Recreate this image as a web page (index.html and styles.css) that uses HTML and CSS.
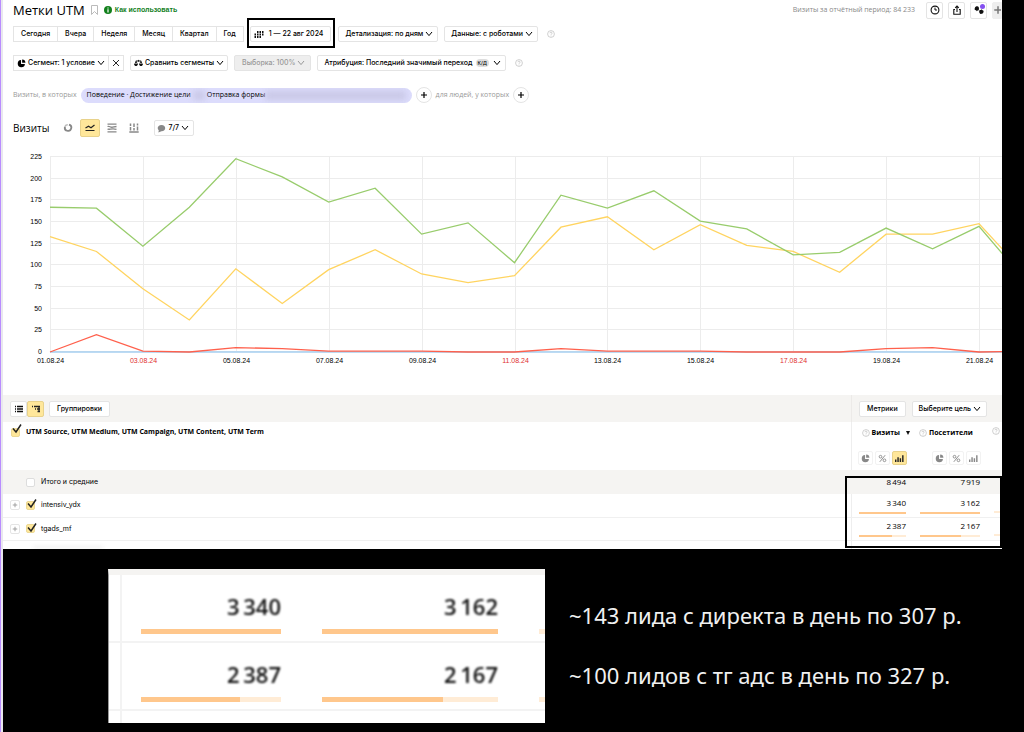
FILE: index.html
```
<!DOCTYPE html>
<html lang="ru">
<head>
<meta charset="utf-8">
<title>Метки UTM</title>
<link rel="stylesheet" href="styles.css">
</head>
<body>
<svg class="defs" aria-hidden="true">
  <symbol id="chev" viewBox="0 0 8 6"><path d="M1 1l3 3.600L7 1" fill="none" stroke="currentColor" stroke-width="1"/></symbol>
  <symbol id="help" viewBox="0 0 8 8"><circle cx="4" cy="4" r="3.400" fill="none" stroke="#bbb" stroke-width=".7"/><path d="M2.900 3.200c0-1.500 2.200-1.400 2.200 0 0 .8-1.100.8-1.100 1.600M4 5.600v.7" fill="none" stroke="#bbb" stroke-width=".7"/></symbol>
  <symbol id="pie" viewBox="0 0 10 10"><path d="M4.500 1.200A4 4 0 1 0 8.800 5.500H4.500z" fill="currentColor"/><path d="M5.700.6v3.700h3.700A3.800 3.800 0 0 0 5.700.6z" fill="currentColor"/></symbol>
  <symbol id="pct" viewBox="0 0 10 10"><g fill="none" stroke="currentColor"><circle cx="2.800" cy="3" r="1.500"/><circle cx="7.200" cy="7" r="1.500"/><path d="M8 1.300L2 8.700"/></g></symbol>
  <symbol id="bars" viewBox="0 0 10 10"><path d="M.8 9V6M3.400 9V3.500M6 9V4.800M8.700 9V1.500" stroke="currentColor" stroke-width="1.600"/></symbol>
  <symbol id="plus" viewBox="0 0 8 8"><path d="M4 1v6M1 4h6" stroke="currentColor" stroke-width="1.200"/></symbol>
  <symbol id="tick" viewBox="0 0 11 11"><path d="M2 4.500l3 3.500 5-7.500" fill="none" stroke="#222" stroke-width="1.500"/></symbol>
</svg>
<main class="report">
  <header class="head">
    <h1>Метки UTM</h1>
    <svg class="bookmark" viewBox="0 0 7 10"><path d="M.5.500h6v9l-3-3-3 3z" fill="none" stroke="#bbb"/></svg>
    <a class="howto" href="#"><svg viewBox="0 0 8 8"><circle cx="4" cy="4" r="4" fill="#12801c"/><path d="M4 1.500v1M4 3.300v3.200" stroke="#fff" stroke-width="1.200"/></svg>Как использовать</a>
    <span class="period">Визиты за отчётный период: 84 233</span>
    <div class="tools">
      <button aria-label="История"><svg viewBox="0 0 10 10"><circle cx="5" cy="5" r="3.900" fill="none" stroke="#111" stroke-width="1.100"/><path d="M5 2.600V5h2" fill="none" stroke="#111"/></svg></button>
      <button aria-label="Экспорт"><svg viewBox="0 0 10 10"><path d="M3 4.500H1.800v4.700h6.400V4.500H7M5 7V1M3.200 2.800L5 1l1.800 1.800" fill="none" stroke="#111" stroke-width="1.100"/></svg></button>
      <button class="feedback" aria-label="Отзыв"><svg viewBox="0 0 10 10"><path d="M3.400 1.200c1.700 0 2 3.300 1.100 4.100-.5.400-1.200-.1-1.600.9l-.9-1C.6 5 .3 4.300.8 3.200 1 1.800 2 1.200 3.400 1.200zM6.800 8.900c-1.700 0-2-3-1.100-3.800.5-.400 1.500.1 1.900-.9l.9 1c1.200.2 1.300 1 .9 2-.2 1.200-1.200 1.700-2.600 1.700z" fill="#111"/></svg></button>
      <button class="add" aria-label="Добавить"><svg viewBox="0 0 8 8"><use href="#plus"/></svg></button>
    </div>
  </header>

  <div class="bar dates">
    <div class="group">
      <button>Сегодня</button><button>Вчера</button><button>Неделя</button><button>Месяц</button><button>Квартал</button><button>Год</button>
    </div>
    <button class="btn range"><svg class="cal" viewBox="0 0 10 7"><path d="M3 1h1.500M5.500 1H7M8 1h1.500M.5 3.500H2M3 3.500h1.500M5.500 3.500H7M8 3.500h1.500M.5 6H2M3 6h1.500M5.500 6H7" stroke="#111" stroke-width="1.900"/></svg>1 — 22 авг 2024</button>
    <button class="btn">Детализация: по дням<svg class="chev"><use href="#chev"/></svg></button>
    <button class="btn">Данные: с роботами<svg class="chev"><use href="#chev"/></svg></button>
    <svg class="help"><use href="#help"/></svg>
  </div>

  <div class="bar segments">
    <div class="group seg">
      <button><svg class="ic"><use href="#pie"/></svg>Сегмент: 1 условие<svg class="chev"><use href="#chev"/></svg></button><button aria-label="Сбросить"><svg class="close" viewBox="0 0 8 8"><path d="M1 1l6 6M7 1L1 7" stroke="#111" stroke-width=".9"/></svg></button>
    </div>
    <button class="btn compare"><svg class="ic" viewBox="0 0 10 10"><g fill="none" stroke="#111"><path d="M2.300 2.500L.8 6M2.300 2.500L3.800 6M7.700 2.500L6.200 6M7.700 2.500L9.200 6M2 2.200L8 2.200M5 1v2"/></g><path d="M.2 5.500h4c0 3-4 3-4 0zM5.800 5.500h4c0 3-4 3-4 0z" fill="#111"/></svg>Сравнить сегменты<svg class="chev"><use href="#chev"/></svg></button>
    <button class="btn sample" disabled>Выборка: 100%<svg class="chev"><use href="#chev"/></svg></button>
    <button class="btn attr">Атрибуция: Последний значимый переход<span class="kd">К/Д</span><svg class="chev"><use href="#chev"/></svg></button>
    <svg class="help"><use href="#help"/></svg>
  </div>

  <div class="bar filter">
    <span class="muted">Визиты, в которых</span>
    <div class="chip"><span>Поведение · Достижение цели</span><i class="smudge short"></i><span>Отправка формы</span><i class="smudge"></i></div>
    <button class="round" aria-label="Добавить условие"><svg viewBox="0 0 8 8"><use href="#plus"/></svg></button>
    <span class="muted">для людей, у которых</span>
    <button class="round" aria-label="Добавить условие для людей"><svg viewBox="0 0 8 8"><use href="#plus"/></svg></button>
  </div>

  <div class="bar kinds">
    <h2>Визиты</h2>
    <div class="types">
      <button aria-label="Круговая"><svg viewBox="0 0 10 10"><path d="M6 1.600A3.200 3.200 0 1 1 2 3.800" fill="none" stroke="#888" stroke-width="1.800"/><path d="M2 3.600A3 3 0 0 1 4.800 1.700" fill="none" stroke="#bbb" stroke-width="1.600"/></svg></button>
      <button class="on" aria-label="Линии"><svg viewBox="0 0 10 10"><path d="M.5 5l3-1.800L6 4.800 9.500 2M.5 7.500h9" fill="none" stroke="#222" stroke-width="1.200"/></svg></button>
      <button aria-label="Области"><svg viewBox="0 0 10 10"><path d="M.5 1.200h9M.5 3.500c2-1 3 1.500 5 .6l4-.6M.5 6c2 1 4-1.200 9 .3M.5 8.800h9" fill="none" stroke="#888" stroke-width="1.300"/></svg></button>
      <button aria-label="Столбцы"><svg viewBox="0 0 10 10"><path d="M1.500.5v2.500M5 .5v3.500M8.500.5v2M1.500 4v3.500M5 5v2.500M8.500 3.500v4M.3 9h9.400" stroke="#888" stroke-width="1.500"/></svg></button>
    </div>
    <button class="btn count"><svg class="ic" viewBox="0 0 10 10"><path d="M5 1c5.500 0 5.500 7 0 7L1.500 9.500l.5-2.500C-.5 5 1 1 5 1z" fill="#888"/></svg>7/7<svg class="chev"><use href="#chev"/></svg></button>
  </div>

  <svg class="chart" viewBox="0 0 999 229" role="img" aria-label="Визиты по дням"></svg>

  <section class="grid">
    <div class="toolbar">
      <div class="view"><button aria-label="Список"><svg viewBox="0 0 8 8"><path d="M0 1.500h1M2 1.500h6M0 4h1M2 4h6M0 6.500h1M2 6.500h6" stroke="#111" stroke-width="1.300"/></svg></button><button class="on" aria-label="Дерево"><svg viewBox="0 0 8 8"><path d="M0 1.500h1M2 1.500h6M3 4h1M5 4h3M5.500 6.500H8M7 1v6" stroke="#222" stroke-width="1.300"/></svg></button></div>
      <button class="btn">Группировки</button>
      <div class="metrics"><button class="btn">Метрики</button><button class="btn goal">Выберите цель<svg class="chev"><use href="#chev"/></svg></button></div>
    </div>
    <table>
      <colgroup><col><col class="c1"><col class="c2"><col class="c3"></colgroup>
      <thead>
        <tr>
          <th><label class="check"><input type="checkbox" checked><svg><use href="#tick"/></svg><span>UTM Source, UTM Medium, UTM Campaign, UTM Content, UTM Term</span></label></th>
          <th class="edge"><div class="mhead"><svg class="help"><use href="#help"/></svg>Визиты<i class="sort"></i></div>
            <div class="modes"><button aria-label="Доли"><svg><use href="#pie"/></svg></button><button aria-label="Проценты"><svg><use href="#pct"/></svg></button><button class="on" aria-label="Полосы"><svg><use href="#bars"/></svg></button></div></th>
          <th><div class="mhead"><svg class="help"><use href="#help"/></svg>Посетители</div>
            <div class="modes"><button aria-label="Доли"><svg><use href="#pie"/></svg></button><button aria-label="Проценты"><svg><use href="#pct"/></svg></button><button aria-label="Полосы"><svg><use href="#bars"/></svg></button></div></th>
          <th><div class="mhead"><svg class="help"><use href="#help"/></svg></div></th>
        </tr>
      </thead>
      <tbody>
        <tr class="total"><td><label class="check inner"><input type="checkbox"><span>Итого и средние</span></label></td><td class="edge num">8&thinsp;494</td><td class="num">7&thinsp;919</td><td></td></tr>
        <tr><td><div class="row"><button class="expand" aria-label="Развернуть"><svg><use href="#plus"/></svg></button><label class="check"><input type="checkbox" checked><svg><use href="#tick"/></svg><span>intensiv_ydx</span></label></div></td>
          <td class="edge num">3&thinsp;340<div class="meter"><i style="width:100%"></i></div></td><td class="num">3&thinsp;162<div class="meter"><i style="width:100%"></i></div></td><td class="num"><div class="meter"></div></td></tr>
        <tr><td><div class="row"><button class="expand" aria-label="Развернуть"><svg><use href="#plus"/></svg></button><label class="check"><input type="checkbox" checked><svg><use href="#tick"/></svg><span>tgads_mf</span></label></div></td>
          <td class="edge num">2&thinsp;387<div class="meter"><i style="width:71%"></i></div></td><td class="num">2&thinsp;167<div class="meter"><i style="width:69%"></i></div></td><td class="num"><div class="meter"></div></td></tr>
        <tr class="rest"><td><div class="ghost"></div></td><td class="edge"></td><td></td><td></td></tr>
      </tbody>
    </table>
    <div class="mark"></div>
  </section>
</main>

<section class="summary">
  <div class="closeup">
    <div class="cell first"><b>3&thinsp;340</b><div class="meter"><i style="width:100%"></i></div></div><div class="cell"><b>3&thinsp;162</b><div class="meter"><i style="width:100%"></i></div></div><div class="cell last"><b></b><div class="meter"></div></div>
    <div class="cell first"><b>2&thinsp;387</b><div class="meter"><i style="width:71%"></i></div></div><div class="cell"><b>2&thinsp;167</b><div class="meter"><i style="width:69%"></i></div></div><div class="cell last"><b></b><div class="meter"></div></div>
  </div>
  <div class="notes">
    <p>~143 лида с директа в день по 307 р.</p>
    <p>~100 лидов с тг адс в день по 327 р.</p>
  </div>
</section>
<script src="chart.js"></script>
</body>
</html>
```
FILE: styles.css
```
* { box-sizing: border-box; }
body { margin: 0; background: #000; color: #000; font: 500 7px/12px Inter, "Liberation Sans", Arial, sans-serif; border-left: 1px solid #b98cff; min-height: 100vh; }
h1, h2, p { margin: 0; }
button { font: inherit; color: inherit; margin: 0; padding: 0; background: #fff; border: 1px solid #e4e4e4; border-radius: 2px; display: inline-flex; align-items: center; justify-content: center; white-space: nowrap; }
svg { flex: none; display: block; }
.defs { position: absolute; width: 0; height: 0; }
.report { background: #fff; margin-right: 22px; border-left: 2px solid #e9e8ee; overflow: hidden; }

.head { display: flex; align-items: center; height: 20px; padding-left: 10px; font-family: "Open Sans", "Noto Sans", sans-serif; }
h1 { font-size: 13px; line-height: 18px; font-weight: 500; }
.bookmark { width: 7px; height: 10px; margin: 0 6px; }
.howto { display: flex; align-items: center; gap: 3px; color: #12801c; text-decoration: none; font-family: "Liberation Sans", Arial, sans-serif; font-weight: bold; font-size: 7px; }
.howto svg { width: 8px; height: 8px; }
.period { margin-left: auto; color: #888; font-weight: 400; }
.tools { display: flex; gap: 5px; margin-left: 11px; }
.tools button { width: 17px; height: 17px; position: relative; }
.tools svg { width: 10px; height: 10px; }
.tools .add { width: 10px; background: #eee; border-color: #eee; border-radius: 2px 0 0 2px; color: #777; overflow: hidden; justify-content: flex-start; }
.feedback::after { content: ""; position: absolute; width: 5px; height: 5px; border-radius: 50%; background: #8450f0; right: 1px; top: 1px; }

.bar { display: flex; align-items: center; padding-left: 10px; }
.group { display: flex; }
.group button { height: 16px; padding: 0 7px; border-radius: 0; }
.group button + button { margin-left: -1px; }
.btn { height: 16px; padding: 0 7px; }
.chev { width: 8px; height: 6px; margin-left: 2px; }
.ic { width: 9px; height: 9px; margin-right: 2px; }
.help { width: 8px; height: 8px; margin-left: 3px; }
.dates { padding-top: 6px; gap: 6px; }
.dates .btn { padding: 0 4px 0 6px; }
.dates .range { margin-right: 1px; padding: 0 7px 0 3px; position: relative; gap: 5px; }
.range::after { content: ""; position: absolute; inset: -9px -5px -7px -4px; border: 2px solid #000; }
.cal { width: 10px; height: 7px; }
.segments { padding-top: 13px; gap: 6px; }
.seg button { padding: 0 3px; }
.compare { padding: 0 3px; }
.close { width: 8px; height: 8px; }
.sample { background: #eee; color: #999; padding: 0 5px 0 7px; }
.attr { padding: 0 4px 0 6px; }
.kd { background: #ddd; border-radius: 4px; font-size: 5px; line-height: 8px; padding: 0 2px; margin: 0 2px 0 3px; }
.filter { padding-top: 16px; gap: 4px; font-family: "Open Sans", "Noto Sans", sans-serif; }
.muted { color: #999; font-weight: 400; }
.chip { display: flex; align-items: center; width: 331px; height: 15px; padding: 0 6px; border-radius: 8px; background: #dcdcfc; overflow: hidden; }
.chip span { white-space: nowrap; }
.smudge { flex: 1; height: 9px; background: #c9c8e6; filter: blur(3px); }
.smudge.short { flex: none; width: 12px; margin: 0 2px; }
.round { width: 16px; height: 16px; border-radius: 50%; }
.round svg { width: 8px; height: 8px; }
.kinds { padding-top: 16px; }
h2 { font: 500 10px/14px "Open Sans", "Noto Sans", sans-serif; }
.types { display: flex; gap: 2px; margin: 0 10px 0 9px; }
.types button { width: 20px; height: 18px; border-color: transparent; }
.types svg { width: 10px; height: 10px; }
.on, .types .on { background: #ffe79a; border-color: #e8d28b; }
.count { padding: 0 4px 0 2px; }
.chart { width: 100%; height: auto; margin-top: 12px; }
.chart text { font: 400 7px "Liberation Sans", Arial, sans-serif; fill: #000; }
.chart .red { fill: #e03030; }
.chart .gridline { stroke: #ececec; stroke-width: 1; }
.chart polyline { fill: none; stroke-width: 1.3; }

.grid { position: relative; margin-top: 17px; }
.toolbar { display: flex; align-items: center; gap: 5px; background: #f5f4f2; height: 27px; padding-left: 7px; }
.view { display: flex; }
.view button { width: 17px; height: 16px; }
.view svg { width: 8px; height: 8px; }
.metrics { display: flex; align-items: center; gap: 6px; width: 151px; height: 27px; margin-left: auto; border-left: 1px solid #eceae8; padding-left: 7px; }
.goal { padding: 0 5px 0 6px; }
table { width: 100%; table-layout: fixed; border-collapse: collapse; }
.c1 { width: 62px; } .c2 { width: 74px; } .c3 { width: 15px; }
th, td { padding: 0; text-align: left; vertical-align: top; border-bottom: 1px solid #f0f0f0; overflow: hidden; }
td { vertical-align: middle; height: 23px; font-weight: 400; }
th { height: 48px; font: bold 7px/12px "Open Sans", "Noto Sans", sans-serif; border-bottom: 0; }
.edge { border-left: 1px solid #eee; }
.check { display: flex; align-items: center; position: relative; padding-left: 8px; gap: 6px; }
.check input { appearance: none; width: 9px; height: 9px; margin: 0; border: 1px solid #ddd; border-radius: 2px; background: #fff; }
.check input:checked { background: #ffe79a; border-color: #ecd995; }
.check svg { position: absolute; left: 8px; top: 0; width: 11px; height: 11px; }
th .check { padding-top: 4px; }
th .check svg { top: 2px; }
.check.inner { padding-left: 23px; }
.total { background: #f5f4f2; }
.total td { height: 24px; border: 0; }
.row { display: flex; align-items: center; padding-left: 7px; }
.expand { width: 10px; height: 10px; color: #999; }
.expand svg { width: 6px; height: 6px; }
.row .check { padding-left: 6px; }
.row .check svg { left: 6px; }
.mhead { display: flex; align-items: center; gap: 2px; padding-top: 5px; }
.mhead .help { margin-left: 10px; }
th:nth-child(3) .mhead .help { margin-left: 6px; }
th:last-child .mhead .help { margin-left: 5px; }
.sort { border: 2px solid transparent; border-top: 4px solid #111; border-bottom: 0; margin-left: 4px; }
.modes { display: flex; gap: 2px; justify-content: flex-end; padding: 12px 6px 0 0; }
.modes button { width: 15px; height: 14px; color: #888; border-color: #f2f2f2; }
.modes .on { color: #222; border-color: #e8d28b; }
.modes svg { width: 9px; height: 9px; }
.num { padding: 0 7px; text-align: right; font: 500 8px/12px "Open Sans", "Noto Sans", sans-serif; }
.meter { height: 2px; background: #ffecd6; margin-top: 3px; }
.meter i { display: block; height: 100%; background: #ffc78c; }
.num:last-child { padding-right: 0; vertical-align: bottom; }
.num:last-child .meter { margin-bottom: 4px; }
.rest td { height: 8px; border-bottom: 0; }
.ghost { width: 70px; height: 3px; margin: 5px 0 0 30px; background: #eee; filter: blur(2px); }
.mark { position: absolute; right: 0; bottom: 1px; width: 157px; height: 72px; border: 2px solid #000; }

.summary { display: flex; gap: 24px; padding: 20px 22px 10px 105px; border-left: 2px solid #e9e8ee; }
.closeup { flex: none; width: 437px; display: grid; grid-template-columns: 185px 217px 1fr; grid-template-rows: 68px 68px 12px; background: linear-gradient(to right, transparent 11px, #f3f3f3 11px, #f3f3f3 13px, transparent 13px) #fff; border-top: 6px solid #f5f4f2; border-left: 1px solid #999; overflow: hidden; }
.cell { border-bottom: 2px solid #f3f3f3; padding: 18px 13px 0 28px; text-align: right; }
.cell.first { padding-left: 32px; }
.cell.last { padding-right: 0; }
.cell b { display: block; height: 26px; font: 600 22px/26px "Open Sans", "Noto Sans", sans-serif; color: #111; filter: blur(1px); }
.closeup .meter { height: 5px; margin-top: 10px; }
.notes { display: flex; flex-direction: column; gap: 30px; padding-top: 31px; color: #f0f0f0; font: 22px/30px "Noto Sans", "Open Sans", sans-serif; white-space: nowrap; }
```
FILE: chart.js
```
const NS = "http://www.w3.org/2000/svg";
const chart = document.querySelector(".chart");
const left = 47, step = 46.45, top0 = 8, base = 203;
const x = (day) => left + day * step;
const y = (value) => base - (value / 225) * (base - top0);

function add(name, attrs, text) {
  const node = document.createElementNS(NS, name);
  for (const key in attrs) node.setAttribute(key, attrs[key]);
  if (text !== undefined) node.textContent = text;
  chart.append(node);
}

for (let v = 0; v <= 225; v += 25) {
  add("line", { class: "gridline", x1: left, x2: 999, y1: Math.round(y(v)) - 0.5, y2: Math.round(y(v)) - 0.5 });
  add("text", { x: 39, y: y(v) + 2, "text-anchor": "end" }, v);
}
for (let d = 0; d <= 20; d += 2) {
  const px = Math.round(x(d)) + 0.5;
  const label = String(d + 1).padStart(2, "0") + ".08.24";
  add("line", { class: "gridline", x1: px, x2: px, y1: top0, y2: base });
  add("text", { x: px, y: 214, "text-anchor": "middle", class: [2, 10, 16].includes(d) ? "red" : "" }, label);
}

const series = {
  "#a6cff0": Array(22).fill(0),
  "#ffd460": [133, 116, 73, 37, 96, 56, 95, 118, 90, 80, 88, 144, 156, 118, 147, 123, 116, 92, 136, 136, 148, 90],
  "#98cc6c": [167, 166, 122, 167, 223, 202, 173, 189, 136, 149, 103, 181, 166, 186, 151, 142, 112, 115, 143, 119, 145, 82],
  "#ff604c": [0, 20, 1, 0, 5, 4, 1, 1, 1, 0, 0, 4, 1, 1, 1, 0, 0, 0, 4, 5, 0, 1]
};
for (const color in series) {
  const points = series[color].map((v, i) => x(i) + "," + y(v)).join(" ");
  add("polyline", { points, stroke: color });
}
```
